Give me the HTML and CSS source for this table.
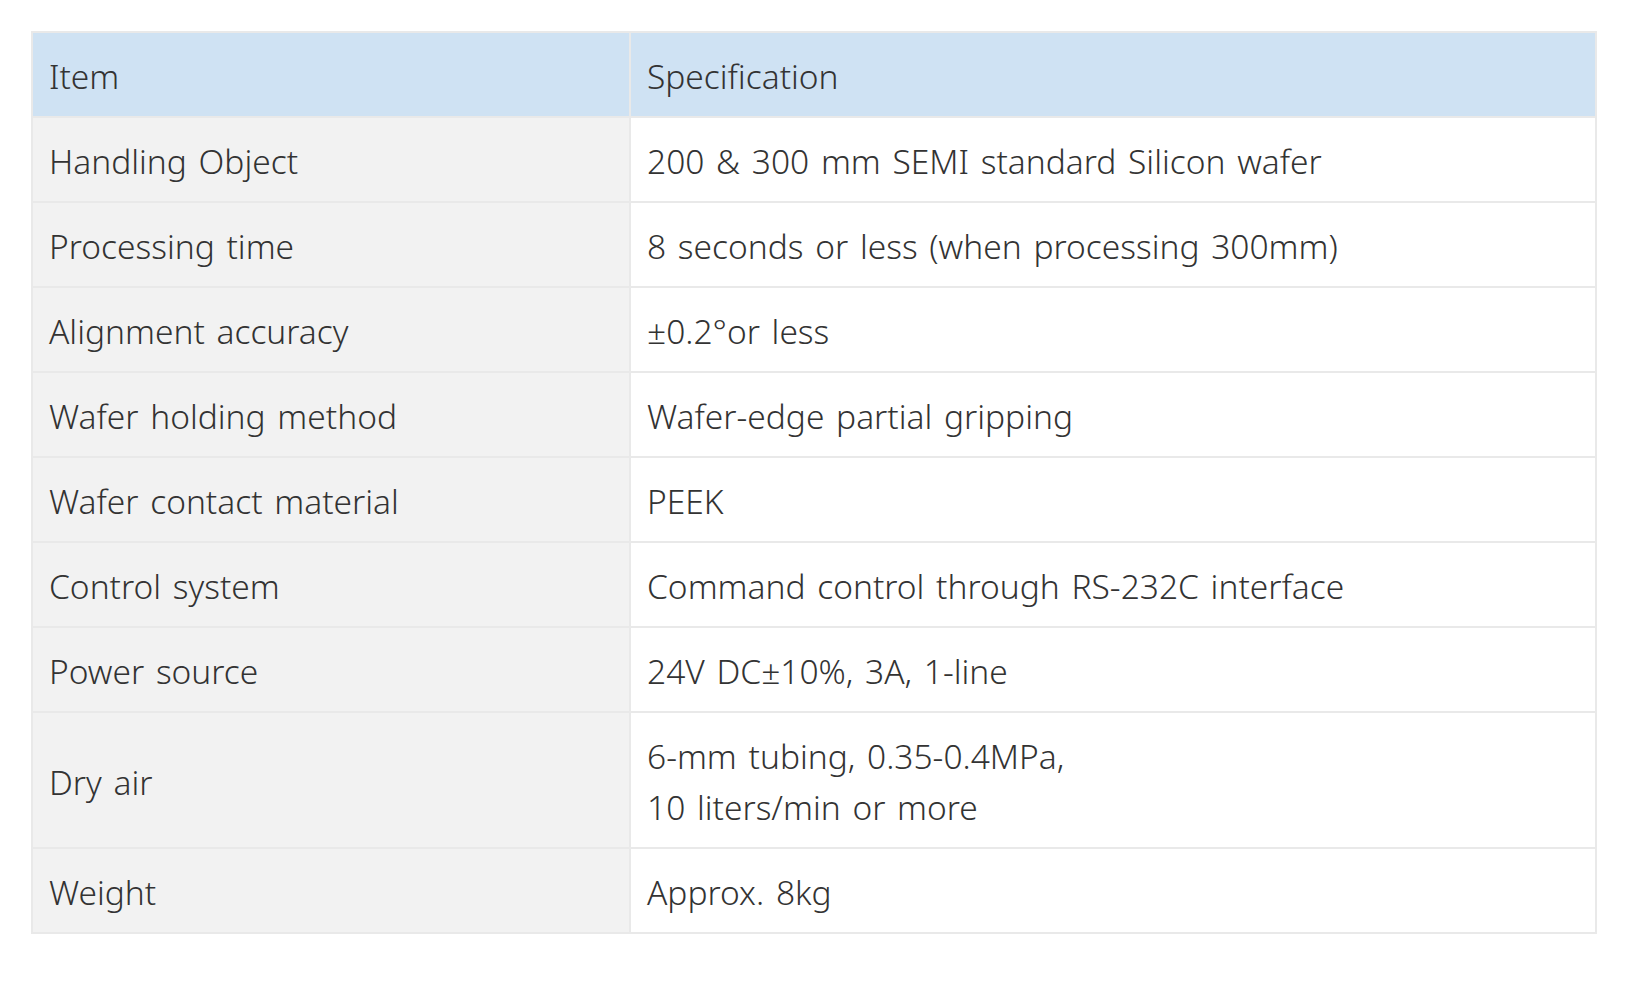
FILE: index.html
```html
<!DOCTYPE html>
<html lang="en">
<head>
<meta charset="utf-8">
<title>Specification</title>
<link rel="stylesheet" href="styles.css">
</head>
<body>
<div class="wrap">
<table class="spec">
  <colgroup><col class="c-item"><col class="c-spec"></colgroup>
  <thead>
    <tr><th>Item</th><th>Specification</th></tr>
  </thead>
  <tbody>
    <tr><td>Handling Object</td><td>200 &amp; 300 mm SEMI standard Silicon wafer</td></tr>
    <tr><td>Processing time</td><td>8 seconds or less (when processing 300mm)</td></tr>
    <tr><td>Alignment accuracy</td><td>±0.2°or less</td></tr>
    <tr><td>Wafer holding method</td><td>Wafer-edge partial gripping</td></tr>
    <tr><td>Wafer contact material</td><td>PEEK</td></tr>
    <tr><td>Control system</td><td>Command control through RS-232C interface</td></tr>
    <tr><td>Power source</td><td>24V DC±10%, 3A, 1-line</td></tr>
    <tr><td>Dry air</td><td>6-mm tubing, 0.35-0.4MPa,<br>10 liters/min or more</td></tr>
    <tr><td>Weight</td><td>Approx. 8kg</td></tr>
  </tbody>
</table>
</div>
</body>
</html>
```
FILE: styles.css
```css
html, body {
  margin: 0;
  padding: 0;
  background: #ffffff;
}
.wrap {
  padding: 31px 0 0 31px;
}
.spec {
  width: 1566px;
  border-collapse: collapse;
  table-layout: fixed;
  font-family: "Noto Sans", "Open Sans", sans-serif;
  font-size: 33.5px;
  font-weight: 300;
  line-height: 51px;
  color: #333333;
  border: 2px solid #e9e9e9;
}
.c-item { width: 598px; }
.spec th,
.spec td {
  border: 2px solid #e9e9e9;
  padding: 18px 16px 14px 16px;
  text-align: left;
  vertical-align: middle;
  font-weight: 300;
  word-spacing: 3px;
}
.spec thead th {
  background: #cfe2f3;
}
.spec tbody td:first-child {
  background: #f2f2f2;
}
.spec tbody td:last-child {
  background: #ffffff;
}
```
